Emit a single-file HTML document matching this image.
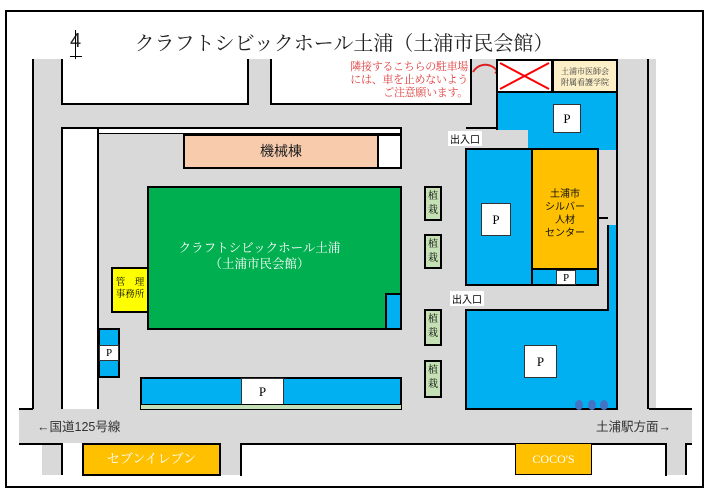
<!DOCTYPE html>
<html><head><meta charset="utf-8"><style>
body{margin:0;width:708px;height:492px;background:#fff;position:relative;overflow:hidden;font-family:"Liberation Serif","Noto Serif CJK SC",serif}
div{position:absolute;box-sizing:border-box}
.g{background:#d9d9d9}
.w{background:#fff}
.b{background:#00b0f0}
.k{border:2px solid #000}
.p{background:#fff;border:1px solid #333;font-size:13px;display:flex;align-items:center;justify-content:center;font-family:"Liberation Serif",serif}
.s{background:#c5e0b4;border:2px solid #000;width:18px;font-size:10px;line-height:14px;text-align:center;padding-top:2px}
.t{font-size:12px}
</style></head><body>
<div style="left:5px;top:10px;width:699px;height:478px;border:2px solid #000"></div>
<div style="left:0;top:27px;width:708px;text-align:center;font-size:20px;color:#222"><span style="position:relative;left:-10px">クラフトシビックホール土浦（土浦市民会館）</span></div>
<div style="left:70px;top:30px;font-size:20px;font-family:'Liberation Sans',sans-serif;color:#222">4</div>
<div style="left:75px;top:30px;width:1px;height:42px;background:#000"></div>
<div style="left:70px;top:56px;width:12px;height:1px;background:#000"></div>
<!-- gray base -->
<div class="g" style="left:33px;top:59px;width:615px;height:350px"></div>
<div class="g" style="left:648px;top:59px;width:8px;height:350px"></div>
<div class="g" style="left:19px;top:409px;width:673px;height:34px"></div>
<div class="g" style="left:42px;top:443px;width:20px;height:32px"></div>
<div class="g" style="left:220px;top:443px;width:21px;height:32px"></div>
<div class="g" style="left:665px;top:443px;width:22px;height:32px"></div>
<div style="left:32px;top:59px;width:2px;height:350px;background:#000"></div>
<div style="left:647px;top:59px;width:2px;height:350px;background:#000"></div>
<div style="left:19px;top:408px;width:14px;height:2px;background:#000"></div>
<div style="left:649px;top:408px;width:43px;height:2px;background:#000"></div>
<!-- top blocks -->
<div class="w" style="left:61px;top:59px;width:188px;height:46px;border:2px solid #000;border-top:none"></div>
<div class="w" style="left:270px;top:59px;width:202px;height:46px;border:2px solid #000;border-top:none"></div>
<div style="left:300px;top:61px;width:168px;text-align:right;color:#e03c3c;font-size:11px;line-height:13px;white-space:nowrap;letter-spacing:-0.3px">隣接するこちらの駐車場<br>には、車を止めないよう<br>ご注意願います。</div>
<svg style="position:absolute;left:465px;top:58px" width="40" height="30"><path d="M8 14 C14 4,28 4,34 16" stroke="#e02020" stroke-width="2" fill="none"/><path d="M30 14 L35 18 L36 11" stroke="#e02020" stroke-width="2" fill="none"/></svg>
<div class="w k" style="left:496px;top:59px;width:57px;height:34px"></div>
<svg style="position:absolute;left:498px;top:61px" width="53" height="30"><path d="M2 2 L51 28 M51 2 L2 28" stroke="#f00" stroke-width="2"/></svg>
<div class="k" style="left:552px;top:59px;width:66px;height:34px;background:#fdf0c8;font-size:8px;line-height:11px;text-align:center;padding-top:5px;color:#333">土浦市医師会<br>附属看護学院</div>
<!-- right blue top -->
<div class="b k" style="left:496px;top:91px;width:122px;height:39px;border-bottom:none"></div>
<div class="b" style="left:528px;top:128px;width:90px;height:22px;border-right:2px solid #000"></div>
<div style="left:466px;top:127px;width:32px;height:2px;background:#000"></div>
<div class="p" style="left:553px;top:104px;width:28px;height:29px">P</div>
<div class="t w" style="left:448px;top:131px;padding:0 2px;font-size:10px;font-family:'Noto Sans CJK JP',sans-serif">出入口</div>
<!-- right lower blocks -->
<div class="b k" style="left:465px;top:148px;width:68px;height:138px"></div>
<div class="p" style="left:481px;top:203px;width:30px;height:33px">P</div>
<div class="k" style="left:531px;top:148px;width:68px;height:122px;background:#ffc000;font-size:10px;line-height:13px;text-align:center;padding-top:36px;color:#111;font-family:'Noto Sans CJK JP',sans-serif">土浦市<br>シルバー<br>人材<br>センター</div>
<div class="b k" style="left:531px;top:268px;width:68px;height:18px"></div>
<div class="p" style="left:556px;top:270px;width:20px;height:15px;font-size:11px">P</div>
<div style="left:598px;top:217px;width:10px;height:2px;background:#000"></div>
<div class="b" style="left:607px;top:225px;width:11px;height:90px;border-left:2px solid #000"></div>
<div class="b" style="left:465px;top:310px;width:153px;height:100px;border:2px solid #000;border-top:none;border-right:none"></div>
<div style="left:465px;top:309px;width:144px;height:2px;background:#000"></div>
<div style="left:616px;top:148px;width:2px;height:262px;background:#000"></div>
<div class="p" style="left:524px;top:345px;width:33px;height:33px">P</div>
<div class="t w" style="left:450px;top:291px;padding:0 2px;font-size:10px;font-family:'Noto Sans CJK JP',sans-serif">出入口</div>
<div style="left:575px;top:400px;width:8px;height:10px;border-radius:50%;background:#4472c4"></div>
<div style="left:588px;top:400px;width:8px;height:10px;border-radius:50%;background:#4472c4"></div>
<div style="left:600px;top:400px;width:8px;height:10px;border-radius:50%;background:#4472c4"></div>
<!-- compound -->
<div style="left:61px;top:127px;width:341px;height:2px;background:#000"></div>
<div style="left:400px;top:127px;width:2px;height:42px;background:#000"></div>
<div class="w" style="left:61px;top:129px;width:38px;height:280px;border-left:2px solid #000;border-right:2px solid #000"></div>
<div class="w" style="left:99px;top:129px;width:301px;height:5px;border-bottom:1px solid #000"></div>
<div class="k" style="left:183px;top:134px;width:196px;height:35px;background:#f8cbad;text-align:center;font-size:14px;line-height:30px;font-family:'Noto Sans CJK JP',sans-serif;color:#222">機械棟</div>
<div class="w k" style="left:377px;top:134px;width:25px;height:35px"></div>
<div class="k" style="left:147px;top:186px;width:255px;height:144px;background:#00b050;color:#fff;text-align:center;font-size:12.5px;line-height:16px;padding-top:52px;padding-right:30px">クラフトシビックホール土浦<br>（土浦市民会館）</div>
<div class="b k" style="left:385px;top:293px;width:17px;height:37px"></div>
<div class="k" style="left:111px;top:267px;width:38px;height:46px;background:#ff0;font-size:9.5px;line-height:12px;text-align:center;padding-top:8px">管　理<br>事務所</div>
<div class="b" style="left:98px;top:328px;width:22px;height:50px;border:2px solid #000"></div>
<div class="p" style="left:99px;top:345px;width:20px;height:16px;font-size:11px">P</div>
<div class="b k" style="left:140px;top:377px;width:262px;height:29px"></div>
<div class="p" style="left:241px;top:378px;width:43px;height:27px">P</div>
<div style="left:140px;top:404px;width:262px;height:6px;background:#c5e0b4;border:1px solid #000"></div>
<div class="s" style="left:424px;top:186px;height:35px">植<br>栽</div>
<div class="s" style="left:424px;top:234px;height:35px">植<br>栽</div>
<div class="s" style="left:424px;top:309px;height:37px">植<br>栽</div>
<div class="s" style="left:424px;top:360px;height:38px">植<br>栽</div>
<div style="left:37px;top:416px;font-size:12.5px;color:#333;font-family:'Liberation Sans','Noto Sans CJK JP',sans-serif">←国道125号線</div>
<div style="left:596px;top:416px;font-size:12.5px;color:#333;font-family:'Liberation Sans','Noto Sans CJK JP',sans-serif">土浦駅方面→</div>
<div style="left:19px;top:443px;width:44px;height:2px;background:#000"></div>
<div style="left:61px;top:443px;width:2px;height:32px;background:#000"></div>
<div class="k" style="left:82px;top:443px;width:139px;height:33px;background:#ffc000;color:#fff;text-align:center;font-size:13px;line-height:28px">セブンイレブン</div>
<div class="w" style="left:240px;top:443px;width:427px;height:33px;border:2px solid #000;border-bottom:none"></div>
<div style="left:515px;top:443px;width:77px;height:32px;background:#ffc000;border:1px solid #000;color:#fff;text-align:center;font-size:12px;line-height:30px">COCO'S</div>
<div style="left:686px;top:443px;width:6px;height:2px;background:#000"></div>
<div style="left:685px;top:443px;width:2px;height:32px;background:#000"></div>
</body></html>
